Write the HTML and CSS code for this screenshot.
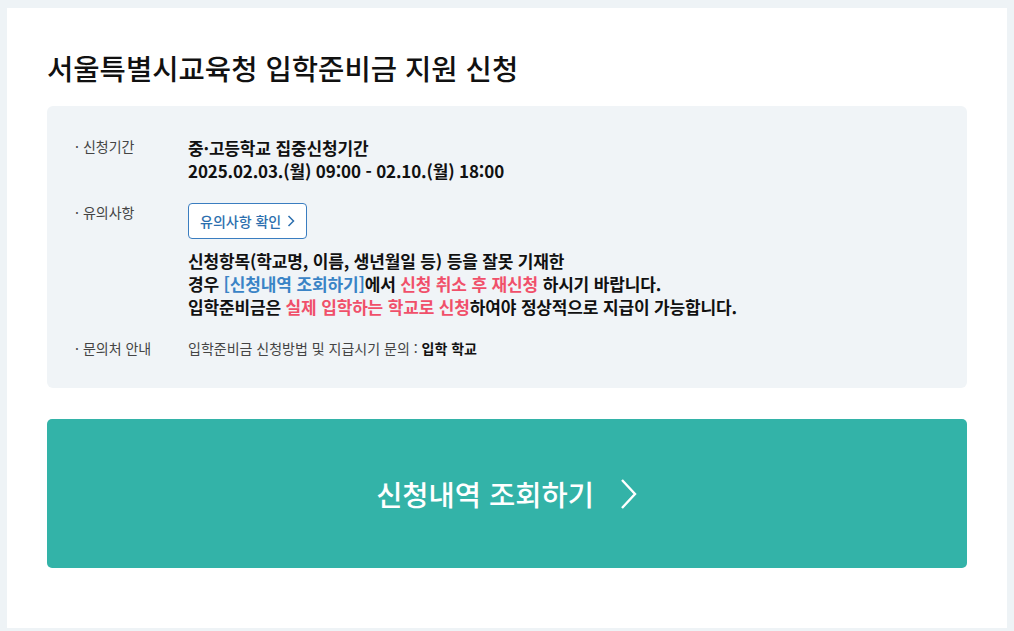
FILE: index.html
```html
<!DOCTYPE html>
<html lang="ko">
<head>
    <meta charset="UTF-8">
    <meta name="viewport" content="width=device-width, initial-scale=1.0">
    <title>입학준비금 지원 신청</title>
    <link rel="stylesheet" href="styles.css">
</head>
<body>
    <div class="card">
        <h1 class="title">서울특별시교육청 입학준비금 지원 신청</h1>

        <div class="info-box">
            <div class="info-row">
                <div class="label">신청기간</div>
                <div class="content strong">
                    <p>중·고등학교 집중신청기간</p>
                    <p>2025.02.03.(월) 09:00 - 02.10.(월) 18:00</p>
                </div>
            </div>
            <div class="info-row">
                <div class="label">유의사항</div>
                <div class="content strong">
                    <button class="notice-btn">유의사항 확인
                        <svg width="8" height="12" viewBox="0 0 8 12"><path d="M1.5 1 L6.5 6 L1.5 11" fill="none" stroke="currentColor" stroke-width="1.5"/></svg>
                    </button>
                    <p>신청항목(학교명, 이름, 생년월일 등) 등을 잘못 기재한</p>
                    <p>경우 <span class="blue">[신청내역 조회하기]</span>에서 <span class="red">신청 취소 후 재신청</span> 하시기 바랍니다.</p>
                    <p>입학준비금은 <span class="red">실제 입학하는 학교로 신청</span>하여야 정상적으로 지급이 가능합니다.</p>
                </div>
            </div>
            <div class="info-row">
                <div class="label">문의처 안내</div>
                <div class="content">
                    <p>입학준비금 신청방법 및 지급시기 문의 : <b>입학 학교</b></p>
                </div>
            </div>
        </div>

        <a class="big-btn" href="#">
            <span>신청내역 조회하기</span>
            <svg width="18" height="32" viewBox="0 0 18 32"><path d="M2 2 L15 16 L2 30" fill="none" stroke="#fff" stroke-width="2.4"/></svg>
        </a>
    </div>
</body>
</html>
```

FILE: styles.css
```css
body {
    margin: 0;
    padding: 8px 7px 3px;
    background-color: #eef3f6;
    font-family: "Noto Sans CJK KR", "Noto Sans", sans-serif;
    color: #111;
}
p {
    margin: 0;
}
.card {
    background-color: #fff;
    height: 620px;
    padding: 0 40px;
    box-sizing: border-box;
}
.title {
    margin: 0;
    padding-top: 41px;
    font-size: 28.6px;
    font-weight: 500;
    line-height: 38px;
    color: #111;
}
.info-box {
    margin-top: 19px;
    background-color: #f0f4f7;
    border-radius: 6px;
    padding: 30px 28px 30px;
    display: flex;
    flex-direction: column;
    gap: 20px;
}
.info-row {
    display: flex;
}
.label {
    width: 113px;
    flex-shrink: 0;
    font-size: 14px;
    line-height: 20px;
    color: #444;
}
.label:before {
    content: "·";
    margin-right: 4px;
}
.content {
    font-size: 14px;
    line-height: 20px;
    color: #444;
}
.content b {
    color: #111;
    font-weight: 700;
}
.strong {
    font-size: 17px;
    line-height: 23px;
    font-weight: 700;
    color: #111;
    letter-spacing: -0.15px;
}
.notice-btn {
    display: flex;
    align-items: center;
    gap: 6px;
    height: 36px;
    padding: 0 11px;
    margin: 1px 0 10px;
    background-color: #fff;
    border: 1px solid #3a7dc0;
    border-radius: 4px;
    color: #2c6fae;
    font-family: inherit;
    font-size: 14px;
    font-weight: 500;
    letter-spacing: 0;
}
.blue {
    color: #3a84c6;
}
.red {
    color: #f0506a;
}
.big-btn {
    margin-top: 31px;
    height: 149px;
    background-color: #33b3a8;
    border-radius: 5px;
    display: flex;
    align-items: center;
    justify-content: center;
    gap: 26px;
    color: #fff;
    text-decoration: none;
    font-size: 28.5px;
    font-weight: 500;
}
```
